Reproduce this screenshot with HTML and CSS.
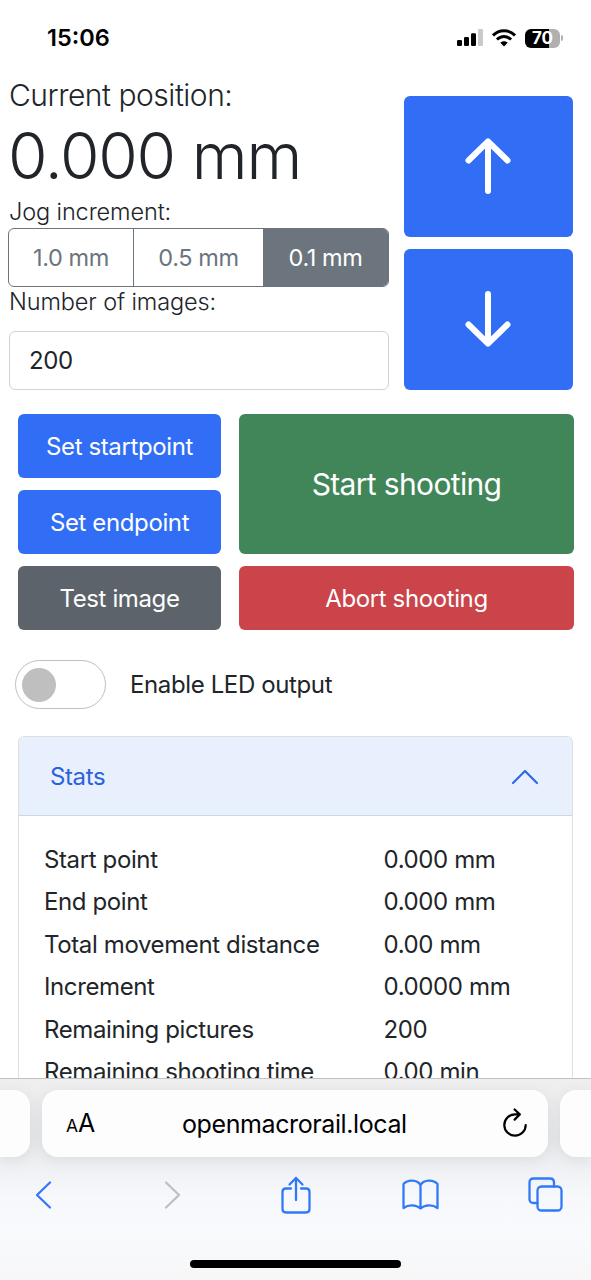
FILE: index.html
```html
<!DOCTYPE html>
<html lang="en">
<head>
<meta charset="utf-8">
<title>OpenMacroRail</title>
<link rel="stylesheet" href="styles.css">
</head>
<body>
<div class="phone">
  <header class="status">
    <span class="clock">15:06</span>
    <div class="status-icons">
      <svg class="signal" width="26" height="18" viewBox="0 0 26 18"><rect x="0" y="11" width="5" height="6" rx="1.3"/><rect x="7" y="8" width="5" height="9" rx="1.3"/><rect x="14" y="4.300" width="5" height="12.700" rx="1.3"/><rect x="21" y="0" width="5" height="17" rx="1.3" fill="#cacaca"/></svg>
      <svg class="wifi" width="24" height="18" viewBox="0 0 24 18"><g fill="none" stroke="#000" stroke-width="2.900"><path d="M1 6.400C7 .1 17 .1 23 6.400"/><path d="M4.900 10.500c4-4.100 10.200-4.100 14.200 0"/></g><path d="M8.300 13.800c2.200-2 5.200-2 7.400 0L12 17.600z"/></svg>
      <span class="battery"><span class="cell">70</span><span class="cap"></span></span>
    </div>
  </header>

  <main class="page">
    <section class="top">
      <div class="readout">
        <div class="pos-label">Current position:</div>
        <div class="pos-value">0.000 mm</div>
        <div class="label jog">Jog increment:</div>
        <div class="btn-group"><span class="opt a">1.0 mm</span><span class="opt b">0.5 mm</span><span class="opt c">0.1 mm</span></div>
        <div class="label images">Number of images:</div>
        <div class="input">200</div>
      </div>
      <div class="arrows">
        <div class="btn blue"><svg width="46" height="56" viewBox="0 0 46 56"><path d="M23 53V4M3.500 22.500 23 3.300l19.500 19.200"/></svg></div>
        <div class="btn blue"><svg width="46" height="56" viewBox="0 0 46 56"><path d="M23 3v49M3.500 33.500 23 52.700l19.500-19.200"/></svg></div>
      </div>
    </section>

    <section class="actions">
      <div class="btn blue t-start">Set startpoint</div>
      <div class="btn green t-shoot">Start shooting</div>
      <div class="btn blue t-end">Set endpoint</div>
      <div class="btn gray t-test">Test image</div>
      <div class="btn red t-abort">Abort shooting</div>
    </section>

    <div class="led"><span class="switch"><span class="knob"></span></span><span class="led-text">Enable LED output</span></div>

    <section class="card">
      <div class="card-head"><span class="stats">Stats</span><svg width="28" height="16" viewBox="0 0 28 16"><path d="M2 14 14 2l12 12"/></svg></div>
      <div class="rows">
        <span class="r1">Start point</span><span class="v">0.000 mm</span>
        <span class="r2">End point</span><span class="v">0.000 mm</span>
        <span class="r3">Total movement distance</span><span class="v">0.00 mm</span>
        <span class="r4">Increment</span><span class="v">0.0000 mm</span>
        <span class="r5">Remaining pictures</span><span class="v">200</span>
        <span class="r6">Remaining shooting time</span><span class="v">0.00 min</span>
      </div>
    </section>
  </main>

  <footer class="safari">
    <div class="tabs">
      <div class="tab side left"></div>
      <div class="tab address"><span class="aa"><small>A</small>A</span><span class="url">openmacrorail.local</span>
        <svg width="26" height="30" viewBox="0 0 26 30"><path d="M23.700 17A10.700 10.700 0 1 1 13 6.300h4.500M12.600 1.500l5.200 4.900-5.200 5.200"/></svg></div>
      <div class="tab side right"></div>
    </div>
    <nav class="tools">
      <svg class="back" width="17" height="30" viewBox="0 0 17 30"><path d="M15 2.500 2 15l13 12.500"/></svg>
      <svg class="off" width="17" height="30" viewBox="0 0 17 30"><path d="M2 2.500 15 15 2 27.500"/></svg>
      <svg class="share" width="30" height="38" viewBox="0 0 30 38"><path d="M10 12.500H5q-3.500 0-3.500 3.500v17q0 3.500 3.500 3.500h20q3.500 0 3.500-3.500V16q0-3.500-3.500-3.500h-5M15 24V2M8.500 8.500 15 2l6.500 6.500"/></svg>
      <svg class="book" width="37" height="31" viewBox="0 0 37 31"><path d="M18.500 29.500V6C15 .6 6 .3 1.500 5v24c5-3.800 12.500-3.500 17 .3 4.500-3.800 12-4.100 17-.3V5c-4.500-4.700-13.500-4.400-17 1"/></svg>
      <svg class="copies" width="35" height="35" viewBox="0 0 35 35"><rect x="9.500" y="9.500" width="24" height="24" rx="4"/><path d="M9.500 26H5.500q-4 0-4-4V5.500q0-4 4-4H22q4 0 4 4v4"/></svg>
    </nav>
    <div class="home"></div>
  </footer>
</div>
</body>
</html>
```
FILE: styles.css
```css
* { box-sizing: border-box; }
body { margin: 0; font-family: Inter, "Liberation Sans", sans-serif; font-size: 24px; letter-spacing: -.38px; color: #212529; background: #fff; }
.phone { width: 591px; height: 1280px; overflow: hidden; display: flex; flex-direction: column; }
.status { height: 72px; flex: none; display: flex; justify-content: space-between; padding: 0 28px 0 47px; color: #000; }
.clock { line-height: 76px; font-size: 23.5px; font-weight: 600; letter-spacing: 0; }
.status-icons { display: flex; height: 76px; align-items: center; gap: 9px; }
.battery { display: flex; align-items: center; gap: 1px; letter-spacing: 0; }
.cell { width: 35px; height: 19px; border-radius: 6px; background: linear-gradient(90deg, #000 70%, #b0b0b0 70%); color: #fff; font-size: 17px; font-weight: 700; line-height: 19px; text-align: center; }
.cap { width: 2px; height: 6px; border-radius: 0 3px 3px 0; background: #b0b0b0; }

.page { height: 1006px; flex: none; overflow: hidden; display: flex; flex-direction: column; }
.top { display: flex; gap: 15px; padding-left: 8px; }
.readout { width: 381px; white-space: nowrap; }
.pos-label { font-size: 30px; font-weight: 300; line-height: 46px; padding-left: 1px; letter-spacing: -.48px; }
.pos-value { font-size: 64px; font-weight: 300; line-height: 75px; letter-spacing: -1.2px; }
.label { font-weight: 300; font-size: 23.5px; padding-left: 1px; letter-spacing: -.12px; }
.jog { padding-top: 3px; line-height: 32px; }
.images { line-height: 30px; }
.btn-group { display: flex; height: 59px; border: 1.5px solid #6c757d; border-radius: 6px; overflow: hidden; color: #6c757d; line-height: 57px; text-align: center; }
.a { width: 125px; border-right: 1px solid #6c757d; }
.b { width: 129px; }
.c { flex: 1; background: #6c757d; color: #fff; }
.opt { font-size: 23.5px; letter-spacing: -.4px; }
.input { margin: 14px 0 0 1px; height: 59px; border: 1.5px solid #ced4da; border-radius: 6px; line-height: 57px; padding-left: 19px; }
.arrows { display: grid; grid-template-rows: 141px 141px; gap: 12px; width: 169px; padding-top: 24px; }
.arrows .btn { width: 169px; padding: 0 2px 1px 0; }
.arrows svg { fill: none; stroke: #fff; stroke-width: 6; stroke-linecap: round; stroke-linejoin: round; }
.btn { display: flex; align-items: center; justify-content: center; border-radius: 6px; color: #fff; white-space: nowrap; padding-top: 1px; }
.blue { background: #316ef5; }
.green { background: #418659; }
.gray { background: #5c636a; }
.red { background: #ca444a; }
.actions { display: grid; grid-template-columns: 203px 335px; grid-template-rows: 64px 64px 64px; column-gap: 18px; row-gap: 12px; padding: 24px 0 0 18px; }
.t-shoot { grid-row: span 2; font-size: 30px; letter-spacing: -.65px; padding-top: 0; }
.led { display: flex; align-items: center; gap: 24px; margin: 30px 0 0 15px; height: 49px; }
.switch { width: 91px; height: 49px; border: 1.3px solid #bfbfbf; border-radius: 25px; display: flex; align-items: center; padding-left: 6px; }
.knob { width: 34px; height: 34px; border-radius: 50%; background: #bfbfbf; }
.card { flex: 1; margin: 27px 18px 0 18px; border: 1.5px solid #dfdfe0; border-bottom: 0; border-radius: 6px 6px 0 0; }
.card-head { height: 79px; background: #e8f0fe; color: #2b62dc; border-bottom: 1.5px solid #cdd6e5; border-radius: 5px 5px 0 0; padding: 1px 33px 0 31px; display: flex; align-items: center; justify-content: space-between; }
.card-head svg { fill: none; stroke: #2f68e6; stroke-width: 2.2; stroke-linecap: round; stroke-linejoin: round; }
.rows { display: grid; grid-template-columns: 339.5px 1fr; grid-auto-rows: 42.4px; line-height: 42.4px; padding: 23px 0 0 25px; white-space: nowrap; }

.safari { flex: 1; border-top: 1px solid #c2c2c4; background: linear-gradient(#efeff0 0, #e8e9eb 60px, #eff1f4 90px, #f6f8fc 118px, #f8fafd 150px, #f7f7f8 100%); color: #000; display: flex; flex-direction: column; align-items: center; }
.tabs { display: flex; gap: 12px; width: 591px; padding-top: 11px; }
.tab { height: 67px; background: #fdfdfe; border-radius: 16px; box-shadow: 0 3px 16px rgba(0,0,0,.07); }
.left { width: 30px; border-radius: 0 16px 16px 0; }
.right { width: 31px; border-radius: 16px 0 0 16px; }
.address { width: 506px; display: flex; justify-content: space-between; align-items: center; padding: 1px 20px 0 24px; line-height: 67px; }
.address svg { fill: none; stroke: #000; stroke-width: 2.2; stroke-linecap: round; stroke-linejoin: round; margin-bottom: 3px; }
.aa { width: 84px; font-size: 25px; letter-spacing: 0; }
.aa small { font-size: 17.5px; }
.url { flex: 1; padding: 1px 0 0 32px; font-size: 25px; letter-spacing: -.4px; }
.tools { width: 591px; height: 75px; display: flex; align-items: center; padding-left: 35px; }
.tools svg { flex: none; fill: none; stroke: #3279f7; stroke-width: 2.3; stroke-linecap: round; stroke-linejoin: round; }
.tools .off { stroke: #bfbfc2; margin-left: 112px; }
.share { margin-left: 100px; }
.book { margin-left: 91px; }
.copies { margin-left: 89px; }
.home { margin-top: 28px; width: 211px; height: 8px; border-radius: 4px; background: #000; }
```
